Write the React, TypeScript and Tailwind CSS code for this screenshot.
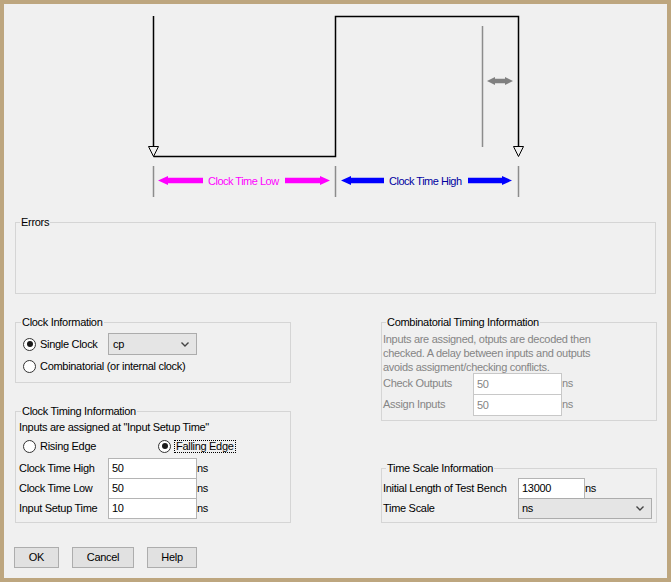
import React from 'react';

const arrowLeft = (x1: number, x2: number, y: number, head = 10, hh = 4.5, bh = 2.75) =>
  `${x1},${y} ${x1 + head},${y - hh} ${x1 + head},${y - bh} ${x2},${y - bh} ${x2},${y + bh} ${x1 + head},${y + bh} ${x1 + head},${y + hh}`;

const arrowRight = (x1: number, x2: number, y: number, head = 10, hh = 4.5, bh = 2.75) =>
  `${x2},${y} ${x2 - head},${y - hh} ${x2 - head},${y - bh} ${x1},${y - bh} ${x1},${y + bh} ${x2 - head},${y + bh} ${x2 - head},${y + hh}`;

const Diagram = () => (
  <svg width="663" height="200" viewBox="4 4 663 200" className="block">
    {/* clock wave */}
    <path
      d="M153.5 16 V146.5 M153.5 156.5 H335.5 V16.5 H518.5 V146.5"
      stroke="#000"
      strokeWidth="1.5"
      fill="none"
    />
    <polygon points="148.5,146.5 158.5,146.5 153.5,156.5" fill="none" stroke="#000" strokeWidth="1" />
    <polygon points="513.5,146.5 523.5,146.5 518.5,156.5" fill="none" stroke="#000" strokeWidth="1" />

    {/* setup time marker */}
    <line x1="482.5" y1="26" x2="482.5" y2="147" stroke="#8c8c8c" strokeWidth="1.5" />
    <polygon
      points="487,81 495,77 495,78.8 505,78.8 505,77 513,81 505,85 505,83.2 495,83.2 495,85"
      fill="#808080"
    />

    {/* ticks */}
    <line x1="153.5" y1="166" x2="153.5" y2="197" stroke="#8c8c8c" strokeWidth="1.5" />
    <line x1="335.5" y1="166" x2="335.5" y2="197" stroke="#8c8c8c" strokeWidth="1.5" />
    <line x1="518.5" y1="166" x2="518.5" y2="197" stroke="#8c8c8c" strokeWidth="1.5" />

    {/* low */}
    <polygon points={arrowLeft(158, 203, 180.5)} fill="#ff00ff" />
    <polygon points={arrowRight(285, 330, 180.5)} fill="#ff00ff" />
    <text x="208" y="184.5" fontSize="11" letterSpacing="-0.5" fill="#ff00ff">
      Clock Time Low
    </text>

    {/* high */}
    <polygon points={arrowLeft(341, 384, 180.5)} fill="#0000ff" />
    <polygon points={arrowRight(468, 512, 180.5)} fill="#0000ff" />
    <text x="389" y="184.5" fontSize="11" letterSpacing="-0.5" fill="#0000a0">
      Clock Time High
    </text>
  </svg>
);

const GroupBox = ({
  title,
  className,
  legendClass,
  children,
}: {
  title: string;
  className: string;
  legendClass: string;
  children?: React.ReactNode;
}) => (
  <fieldset className={`border border-[#d5d5d5] ${className}`}>
    <legend className={`leading-[14px] px-[1px] ${legendClass}`}>{title}</legend>
    {children}
  </fieldset>
);

const Radio = ({ checked }: { checked?: boolean }) => (
  <span className="w-[13px] h-[13px] rounded-full border border-[#333] bg-white flex items-center justify-center shrink-0">
    {checked && <span className="w-[6px] h-[6px] rounded-full bg-[#1a1a1a]" />}
  </span>
);

const Chevron = () => (
  <svg width="8" height="5" viewBox="0 0 8 5" className="shrink-0">
    <path d="M0.5 0.5 L4 4 L7.5 0.5" stroke="#444" strokeWidth="1.4" fill="none" />
  </svg>
);

const TextBox = ({ value, className, disabled }: { value: string; className: string; disabled?: boolean }) => (
  <div
    className={`bg-white border border-[#b4b4b4] flex items-center pl-[3px] shrink-0 ${disabled ? 'text-[#858585]' : 'text-black'} ${className}`}
  >
    {value}
  </div>
);

const Button = ({ label, className }: { label: string; className: string }) => (
  <div className={`h-[21px] bg-[#e1e1e1] border border-[#adadad] flex items-center justify-center ${className}`}>
    {label}
  </div>
);

export default function App() {
  return (
    <div className="w-[671px] h-[582px] border-4 border-[#bda67f] bg-[#f0f0f0] text-black text-[11px] tracking-[-0.3px] font-['Liberation_Sans',Arial,sans-serif] overflow-hidden">
      <Diagram />

      <GroupBox title="Errors" className="ml-[11px] mt-[11px] w-[641px] h-[79px]" legendClass="ml-[4px]" />

      <div className="flex mt-[21px] ml-[11px]">
        {/* left column */}
        <div className="w-[276px] flex flex-col">
          <GroupBox title="Clock Information" className="h-[68px]" legendClass="ml-[5px]">
            <div className="flex items-center h-[22px] mt-[4px]">
              <span className="ml-[7px]">
                <Radio checked />
              </span>
              <span className="ml-[4px] w-[68px]">Single Clock</span>
              <div className="w-[89px] h-[22px] bg-[#e5e5e5] border border-[#acacac] flex items-center justify-between pl-[4px] pr-[7px]">
                <span>cp</span>
                <Chevron />
              </div>
            </div>
            <div className="flex items-center h-[20px] mt-[1px]">
              <span className="ml-[7px]">
                <Radio />
              </span>
              <span className="ml-[4px]">Combinatorial (or internal clock)</span>
            </div>
          </GroupBox>

          <GroupBox title="Clock Timing Information" className="h-[119px] mt-[21px]" legendClass="ml-[5px]">
            <div className="pl-[3px] leading-[14px] mt-[2px]">Inputs are assigned at "Input Setup Time"</div>
            <div className="flex items-center h-[16px] mt-[4px]">
              <span className="ml-[7px]">
                <Radio />
              </span>
              <span className="ml-[4px] w-[118px]">Rising Edge</span>
              <Radio checked />
              <span className="ml-[3px] border border-dotted border-black leading-[11px] px-[1px]">Falling Edge</span>
            </div>
            <div className="mt-[4px] flex flex-col">
              {[
                ['Clock Time High', '50'],
                ['Clock Time Low', '50'],
                ['Input Setup Time', '10'],
              ].map(([label, value]) => (
                <div key={label} className="flex items-center h-[20px]">
                  <span className="pl-[3px] w-[92px]">{label}</span>
                  <TextBox value={value} className="w-[89px] h-[21px] -mb-[1px]" />
                  <span>ns</span>
                </div>
              ))}
            </div>
          </GroupBox>
        </div>

        {/* right column */}
        <div className="w-[276px] ml-[90px] flex flex-col">
          <GroupBox title="Combinatorial Timing Information" className="h-[106px]" legendClass="ml-[4px]">
            <div className="pl-[1px] leading-[14px] mt-[3px] text-[#858585]">
              <div>Inputs are assigned, otputs are decoded then</div>
              <div>checked. A delay between inputs and outputs</div>
              <div>avoids assigment/checking conflicts.</div>
            </div>
            <div className="flex flex-col -mt-[1px]">
              {[
                ['Check Outputs', '50'],
                ['Assign Inputs', '50'],
              ].map(([label, value]) => (
                <div key={label} className="flex items-center h-[21px] text-[#858585]">
                  <span className="pl-[1px] w-[91px]">{label}</span>
                  <TextBox value={value} disabled className="w-[89px] h-[22px] -mb-[1px] border-[#c8c8c8]" />
                  <span>ns</span>
                </div>
              ))}
            </div>
          </GroupBox>

          <GroupBox title="Time Scale Information" className="h-[62px] mt-[40px]" legendClass="ml-[4px]">
            <div className="flex items-center h-[20px] mt-[3px]">
              <span className="pl-[1px] w-[136px]">Initial Length of Test Bench</span>
              <TextBox value="13000" className="w-[67px] h-[21px] -mb-[1px]" />
              <span>ns</span>
            </div>
            <div className="flex items-center h-[20px]">
              <span className="pl-[1px] w-[136px]">Time Scale</span>
              <div className="w-[134px] h-[21px] bg-[#e5e5e5] border border-[#acacac] flex items-center justify-between pl-[3px] pr-[7px]">
                <span>ns</span>
                <Chevron />
              </div>
            </div>
          </GroupBox>
        </div>
      </div>

      <div className="flex mt-[24px] ml-[10px]">
        <Button label="OK" className="w-[45px]" />
        <Button label="Cancel" className="w-[62px] ml-[13px]" />
        <Button label="Help" className="w-[50px] ml-[13px]" />
      </div>
    </div>
  );
}
